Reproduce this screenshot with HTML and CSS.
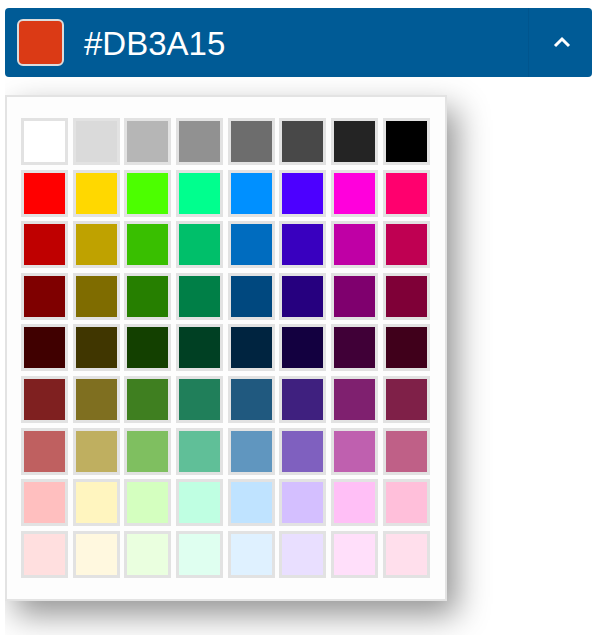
FILE: index.html
```html
<!DOCTYPE html>
<html lang="en">
<head>
  <meta charset="UTF-8">
  <title>Color picker</title>
  <link rel="stylesheet" href="styles.css">
</head>
<body>

  <div class="picker">
    <div class="picker-head">
      <div class="picker-value">
        <span class="picker-current" style="background:#DB3A15"></span>
        <span class="picker-hex">#DB3A15</span>
      </div>
      <div class="picker-toggle">
        <svg width="18" height="12" viewBox="0 0 18 12">
          <polyline points="2,10 9,3 16,10" fill="none" stroke="#fff" stroke-width="3"/>
        </svg>
      </div>
    </div>

    <div class="picker-panel">
      <div class="palette">
        <span style="background:#FFFFFF"></span><span style="background:#DADADA"></span><span style="background:#B6B6B6"></span><span style="background:#919191"></span><span style="background:#6D6D6D"></span><span style="background:#484848"></span><span style="background:#242424"></span><span style="background:#000000"></span>
        <span style="background:#FF0000"></span><span style="background:#FFD800"></span><span style="background:#4CFF00"></span><span style="background:#00FF8E"></span><span style="background:#0090FF"></span><span style="background:#4C00FF"></span><span style="background:#FF00DC"></span><span style="background:#FF006E"></span>
        <span style="background:#BF0000"></span><span style="background:#BFA200"></span><span style="background:#39BF00"></span><span style="background:#00BF6A"></span><span style="background:#006CBF"></span><span style="background:#3900BF"></span><span style="background:#BF00A5"></span><span style="background:#BF0052"></span>
        <span style="background:#7F0000"></span><span style="background:#7F6C00"></span><span style="background:#267F00"></span><span style="background:#007F47"></span><span style="background:#00487F"></span><span style="background:#26007F"></span><span style="background:#7F006E"></span><span style="background:#7F0037"></span>
        <span style="background:#400000"></span><span style="background:#403600"></span><span style="background:#134000"></span><span style="background:#004023"></span><span style="background:#002440"></span><span style="background:#130040"></span><span style="background:#400037"></span><span style="background:#40001B"></span>
        <span style="background:#7F2020"></span><span style="background:#7F6F20"></span><span style="background:#3F7F20"></span><span style="background:#207F5A"></span><span style="background:#20597F"></span><span style="background:#3F207F"></span><span style="background:#7F206F"></span><span style="background:#7F2048"></span>
        <span style="background:#BF6060"></span><span style="background:#BFAF60"></span><span style="background:#7FBF60"></span><span style="background:#60BF98"></span><span style="background:#6096BF"></span><span style="background:#7F60BF"></span><span style="background:#BF60AF"></span><span style="background:#BF6087"></span>
        <span style="background:#FFBFBF"></span><span style="background:#FFF5BF"></span><span style="background:#D4FFBF"></span><span style="background:#BFFFE2"></span><span style="background:#BFE3FF"></span><span style="background:#D4BFFF"></span><span style="background:#FFBFF6"></span><span style="background:#FFBFDA"></span>
        <span style="background:#FFDFDF"></span><span style="background:#FFF8DF"></span><span style="background:#EAFFDF"></span><span style="background:#DFFFF0"></span><span style="background:#DFF1FF"></span><span style="background:#E9DFFF"></span><span style="background:#FFDFFA"></span><span style="background:#FFDFEC"></span>
      </div>
    </div>
  </div>

</body>
</html>
```

FILE: styles.css
```css
* {
  box-sizing: border-box;
}

html, body {
  background: #fff;
}

body {
  margin: 8px 10px 0 5px;
  padding-bottom: 40px;
  font-family: "Liberation Sans", Arial, sans-serif;
}

.picker-head {
  display: flex;
  height: 69px;
  background: #005b96;
  border-radius: 4px;
  color: #fff;
}

.picker-value {
  flex: 1;
  display: flex;
  align-items: center;
  padding-left: 12px;
}

.picker-current {
  width: 47px;
  height: 47px;
  border: 2px solid #dcdcdc;
  border-radius: 6px;
}

.picker-hex {
  margin-left: 20px;
  font-size: 33px;
  line-height: 1;
  margin-top: 1px;
}

.picker-toggle {
  width: 64px;
  display: flex;
  align-items: center;
  justify-content: center;
  border-left: 1px solid #00558e;
  padding-left: 3px;
  padding-bottom: 2px;
}

.picker-toggle svg {
  display: block;
}

.picker-panel {
  width: 442px;
  margin-top: 18px;
  padding: 21px 15px 21px 14px;
  background: #fdfdfd;
  border: 2px solid #e3e3e3;
  box-shadow: 10px 14px 30px rgba(0, 0, 0, 0.42);
}

.palette {
  display: grid;
  grid-template-columns: repeat(8, 47px);
  grid-auto-rows: 47px;
  gap: 4.6px 4.7px;
}

.palette span {
  display: block;
  border: 3px solid #e2e2e2;
}
```
